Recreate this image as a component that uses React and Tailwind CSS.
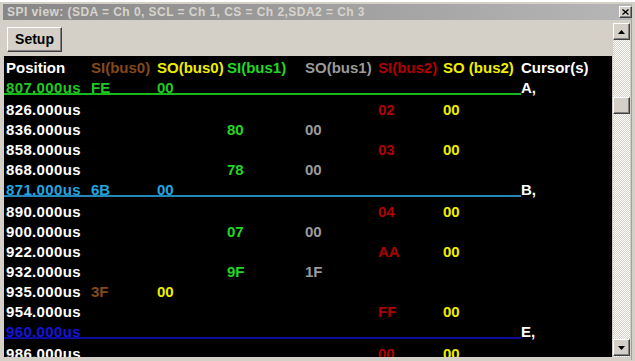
import React from 'react';

const C = {
  white: 'text-white',
  si0: 'text-[#84481a]',
  so0: 'text-[#eeee00]',
  si1: 'text-[#22d822]',
  so1: 'text-[#9a9a9a]',
  si2: 'text-[#b00000]',
  so2: 'text-[#eeee00]',
};

const CURSORS = {
  A: { text: 'text-[#20c820]', line: 'border-b-2 border-[#18b818]' },
  B: { text: 'text-[#22a6e0]', line: 'border-b-2 border-[#2288b8]' },
  E: { text: 'text-[#1414d8]', line: 'border-b-2 border-[#0c0c9c]' },
};

const KEYS = ['si0', 'so0', 'si1', 'so1', 'si2', 'so2'];

const ROWS = [
  { pos: '807.000us', si0: 'FE', so0: '00', cursor: 'A' },
  { pos: '826.000us', si2: '02', so2: '00' },
  { pos: '836.000us', si1: '80', so1: '00' },
  { pos: '858.000us', si2: '03', so2: '00' },
  { pos: '868.000us', si1: '78', so1: '00' },
  { pos: '871.000us', si0: '6B', so0: '00', cursor: 'B' },
  { pos: '890.000us', si2: '04', so2: '00' },
  { pos: '900.000us', si1: '07', so1: '00' },
  { pos: '922.000us', si2: 'AA', so2: '00' },
  { pos: '932.000us', si1: '9F', so1: '1F' },
  { pos: '935.000us', si0: '3F', so0: '00' },
  { pos: '954.000us', si2: 'FF', so2: '00' },
  { pos: '960.000us', cursor: 'E' },
  { pos: '986.000us', si2: '00', so2: '00' },
];

const raised = 'bg-[#d4d0c8] border border-t-white border-l-white border-r-[#404040] border-b-[#404040] shadow-[inset_-1px_-1px_#808080]';

function Row({ r }) {
  const cur = r.cursor ? CURSORS[r.cursor] : null;
  return (
    <div className={`flex ${cur ? 'h-[22px]' : 'h-[20px]'}`}>
      <div className={`w-[517px] h-[17px] pl-[2px] grid grid-cols-[85px_66px_70px_78px_73px_65px_78px] ${cur ? cur.line : ''}`}>
        <div className={`tracking-[0.35px] ${cur ? cur.text : C.white}`}>{r.pos}</div>
        {KEYS.map(k => (
          <div key={k} className={cur ? cur.text : C[k]}>{r[k] || ''}</div>
        ))}
      </div>
      <div className="text-white">{r.cursor ? `${r.cursor},` : ''}</div>
    </div>
  );
}

function Arrow({ up }) {
  return (
    <svg width="7" height="4" viewBox="0 0 7 4">
      <polygon points={up ? '3.5,0 7,4 0,4' : '0,0 7,0 3.5,4'} fill="#000" />
    </svg>
  );
}

export default function App() {
  return (
    <div className="w-[635px] h-[361px] bg-[#d4d0c8] border-t-2 border-white overflow-hidden font-['Liberation_Sans',Arial,sans-serif]">
      {/* title bar */}
      <div className="ml-[3px] mr-[3px] mt-[2px] h-[16px] flex items-center justify-between bg-gradient-to-r from-[#878787] to-[#b6b6b6]">
        <div className="pl-[4px] text-[12px] tracking-[0.45px] font-bold text-[#d8d4cc] whitespace-nowrap">SPI view: (SDA = Ch 0, SCL = Ch 1, CS = Ch 2,SDA2 = Ch 3</div>
        <div className={`w-[13px] h-[12px] flex items-center justify-center ${raised}`}>
          <svg width="7" height="6" viewBox="0 0 7 6">
            <path d="M0.5 0.5 L6.5 5.5 M6.5 0.5 L0.5 5.5" stroke="#000" strokeWidth="1.4" />
          </svg>
        </div>
      </div>

      <div className="flex">
        <div className="ml-[4px] w-[608px]">
          {/* toolbar */}
          <div className="h-[36px] pt-[7px] pl-[3px]">
            <button className={`w-[55px] h-[25px] text-[14px] font-bold text-black flex items-center justify-center ${raised}`}>Setup</button>
          </div>
          {/* list */}
          <div className="h-[301px] bg-black overflow-hidden pt-[2px] text-[15px] font-bold leading-[20px] whitespace-nowrap">
            <div className="flex h-[20px]">
              <div className="w-[517px] pl-[2px] grid grid-cols-[85px_66px_70px_78px_73px_65px_78px]">
                <div className="text-white">Position</div>
                <div className={C.si0}>SI(bus0)</div>
                <div className={C.so0}>SO(bus0)</div>
                <div className={C.si1}>SI(bus1)</div>
                <div className={C.so1}>SO(bus1)</div>
                <div className={C.si2}>SI(bus2)</div>
                <div className={C.so2}>SO (bus2)</div>
              </div>
              <div className="text-white">Cursor(s)</div>
            </div>
            {ROWS.map(r => <Row key={r.pos} r={r} />)}
          </div>
        </div>

        {/* scrollbar */}
        <div className="ml-[1px] mt-[3px] w-[17px] h-[334px] flex flex-col [background:repeating-conic-gradient(#d4d0c8_0_25%,#ffffff_0_50%)_0_0/2px_2px]">
          <div className={`h-[17px] flex items-center justify-center ${raised}`}><Arrow up /></div>
          <div className="h-[57px]" />
          <div className={`h-[17px] ${raised}`} />
          <div className="flex-1" />
          <div className={`h-[17px] flex items-center justify-center ${raised}`}><Arrow /></div>
          <div className="h-[1px]" />
        </div>
        <div className="ml-[1px] w-[1px] h-[340px] bg-[#a0a0a0]" />
      </div>
    </div>
  );
}
